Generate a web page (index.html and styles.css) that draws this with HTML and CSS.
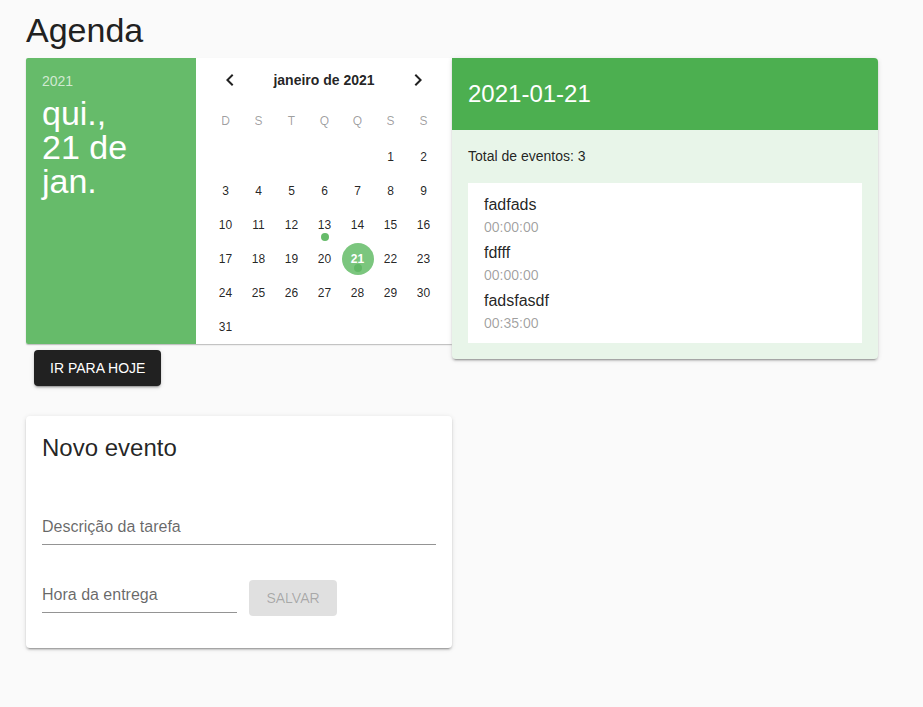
FILE: index.html
```html
<!DOCTYPE html>
<html lang="pt">
<head>
<meta charset="utf-8">
<title>Agenda</title>
<link rel="stylesheet" href="styles.css">
</head>
<body>
<main class="page">
  <h1 class="page-title">Agenda</h1>
  <div class="top-row">
    <div class="left-col">
      <div class="picker">
        <div class="picker-title">
          <div class="picker-year">2021</div>
          <div class="picker-date">qui.,<br>21 de<br>jan.</div>
        </div>
        <div class="picker-body">
          <div class="picker-header">
            <button class="nav-btn" aria-label="anterior">
              <svg width="24" height="24" viewBox="0 0 24 24"><path d="M15.41 16.58L10.83 12l4.58-4.59L14 6l-6 6 6 6z" fill="rgba(0,0,0,0.87)"/></svg>
            </button>
            <div class="month-label">janeiro de 2021</div>
            <button class="nav-btn" aria-label="próximo">
              <svg width="24" height="24" viewBox="0 0 24 24"><path d="M8.59 16.58L13.17 12 8.59 7.41 10 6l6 6-6 6z" fill="rgba(0,0,0,0.87)"/></svg>
            </button>
          </div>
          <div class="grid">
            <div class="wd">D</div><div class="wd">S</div><div class="wd">T</div><div class="wd">Q</div><div class="wd">Q</div><div class="wd">S</div><div class="wd">S</div>
            <div></div><div></div><div></div><div></div><div></div><div class="day">1</div><div class="day">2</div>
            <div class="day">3</div><div class="day">4</div><div class="day">5</div><div class="day">6</div><div class="day">7</div><div class="day">8</div><div class="day">9</div>
            <div class="day">10</div><div class="day">11</div><div class="day">12</div><div class="day has-event">13</div><div class="day">14</div><div class="day">15</div><div class="day">16</div>
            <div class="day">17</div><div class="day">18</div><div class="day">19</div><div class="day">20</div><div class="day selected has-event"><span class="sel">21</span></div><div class="day">22</div><div class="day">23</div>
            <div class="day">24</div><div class="day">25</div><div class="day">26</div><div class="day">27</div><div class="day">28</div><div class="day">29</div><div class="day">30</div>
            <div class="day">31</div>
          </div>
        </div>
      </div>
      <button class="btn-today">IR PARA HOJE</button>
    </div>
    <section class="events-card">
      <div class="events-head">2021-01-21</div>
      <div class="events-body">
        <div class="events-total">Total de eventos: 3</div>
        <ul class="events-list">
          <li><div class="ev-title">fadfads</div><div class="ev-time">00:00:00</div></li>
          <li><div class="ev-title">fdfff</div><div class="ev-time">00:00:00</div></li>
          <li><div class="ev-title">fadsfasdf</div><div class="ev-time">00:35:00</div></li>
        </ul>
      </div>
    </section>
  </div>

  <section class="new-card">
    <h2 class="new-title">Novo evento</h2>
    <div class="field field-full"><span class="placeholder">Descrição da tarefa</span></div>
    <div class="form-row">
      <div class="field field-short"><span class="placeholder">Hora da entrega</span></div>
      <button class="btn-save" disabled>SALVAR</button>
    </div>
  </section>
</main>
</body>
</html>
```

FILE: styles.css
```css
* { box-sizing: border-box; }
html, body { margin: 0; padding: 0; }
body {
  background: #fafafa;
  font-family: "Liberation Sans", Arial, sans-serif;
  color: rgba(0,0,0,0.87);
  width: 923px;
  height: 707px;
  overflow: hidden;
}
.page { padding: 0 26px; }
.page-title {
  margin: 10px 0 8px;
  font-size: 34px;
  line-height: 40px;
  font-weight: 400;
  color: #212121;
}
.top-row { display: flex; align-items: flex-start; }
.left-col { width: 426px; display: flex; flex-direction: column; align-items: flex-start; }

.picker {
  display: flex;
  width: 426px;
  height: 286px;
  background: #fff;
  box-shadow: 0 1px 1px -1px rgba(0,0,0,.2), 0 1px 1px 0 rgba(0,0,0,.14), 0 1px 2px 0 rgba(0,0,0,.12);
  border-radius: 2px 0 0 2px;
}
.picker-title {
  width: 170px;
  background: #66bb6a;
  color: #fff;
  padding: 13px 16px 0;
  border-radius: 2px 0 0 2px;
}
.picker-year {
  font-size: 14px;
  line-height: 20px;
  color: rgba(255,255,255,0.7);
  margin-bottom: 5px;
}
.picker-date {
  font-size: 34px;
  line-height: 34px;
}
.picker-body { width: 256px; padding-top: 4px; }
.picker-header {
  height: 36px;
  display: flex;
  align-items: center;
  justify-content: space-between;
  padding: 0 22px 0 22px;
}
.nav-btn {
  width: 24px; height: 24px; padding: 0;
  border: 0; background: none;
  display: flex; align-items: center; justify-content: center;
}
.month-label { font-size: 14px; font-weight: 700; color: rgba(0,0,0,0.87); }
.grid {
  margin: 6px 0 0 13px;
  display: grid;
  grid-template-columns: repeat(7, 33px);
  grid-template-rows: 36px;
  grid-auto-rows: 34px;
}
.wd, .day {
  display: flex; align-items: center; justify-content: center;
  font-size: 12px;
}
.wd { color: rgba(0,0,0,0.38); padding-bottom: 2px; }
.day { position: relative; color: rgba(0,0,0,0.87); }
.day.has-event::after {
  content: "";
  position: absolute;
  left: 50%;
  top: 25px;
  width: 8px; height: 8px;
  margin-left: -4px;
  border-radius: 50%;
  background: #66bb6a;
}
.sel {
  width: 32px; height: 32px;
  border-radius: 50%;
  background: #7bc67e;
  color: #fff;
  font-weight: 700;
  display: flex; align-items: center; justify-content: center;
}
.day.selected::after { top: 22px; background: #62b866; }

.btn-today {
  margin: 6px 0 0 8px;
  height: 36px;
  padding: 0 16px;
  background: #212121;
  color: #fff;
  border: 0;
  border-radius: 4px;
  font-family: inherit;
  font-size: 14px;
  font-weight: 500;
  box-shadow: 0 3px 1px -2px rgba(0,0,0,.2), 0 2px 2px 0 rgba(0,0,0,.14), 0 1px 5px 0 rgba(0,0,0,.12);
}

.events-card {
  width: 426px;
  background: #e8f5e9;
  border-radius: 0 4px 4px 4px;
  box-shadow: 0 3px 1px -2px rgba(0,0,0,.2), 0 2px 2px 0 rgba(0,0,0,.14), 0 1px 5px 0 rgba(0,0,0,.12);
}
.events-head {
  height: 72px;
  background: #4caf50;
  color: #fff;
  font-size: 24px;
  padding: 0 16px;
  display: flex; align-items: center;
  border-radius: 0 4px 0 0;
}
.events-body { padding: 16px; }
.events-total { font-size: 14px; line-height: 20px; color: rgba(0,0,0,0.87); }
.events-list {
  list-style: none;
  margin: 17px 0 0;
  padding: 10px 16px 6px;
  background: #fff;
}
.ev-title { font-size: 16px; line-height: 24px; color: rgba(0,0,0,0.87); }
.ev-time { font-size: 14px; line-height: 24px; color: rgba(0,0,0,0.38); margin-top: -2px; padding-bottom: 2px; }

.new-card {
  margin-top: 30px;
  width: 426px;
  background: #fff;
  border-radius: 4px;
  padding: 16px 16px 32px;
  box-shadow: 0 3px 1px -2px rgba(0,0,0,.2), 0 2px 2px 0 rgba(0,0,0,.14), 0 1px 5px 0 rgba(0,0,0,.12);
}
.new-title {
  margin: 0;
  font-size: 24px;
  line-height: 32px;
  font-weight: 400;
  color: rgba(0,0,0,0.87);
}
.field {
  border-bottom: 1px solid rgba(0,0,0,0.42);
  padding-bottom: 5px;
  font-size: 16px;
  line-height: 24px;
}
.placeholder { color: rgba(0,0,0,0.6); }
.field-full { margin-top: 51px; }
.form-row { margin-top: 35px; display: flex; align-items: center; }
.field-short { width: 195px; }
.btn-save {
  margin-left: 12px;
  width: 88px;
  height: 36px;
  border: 0;
  border-radius: 4px;
  background: rgba(0,0,0,0.12);
  color: rgba(0,0,0,0.26);
  font-family: inherit;
  font-size: 14px;
  font-weight: 500;
}
```
